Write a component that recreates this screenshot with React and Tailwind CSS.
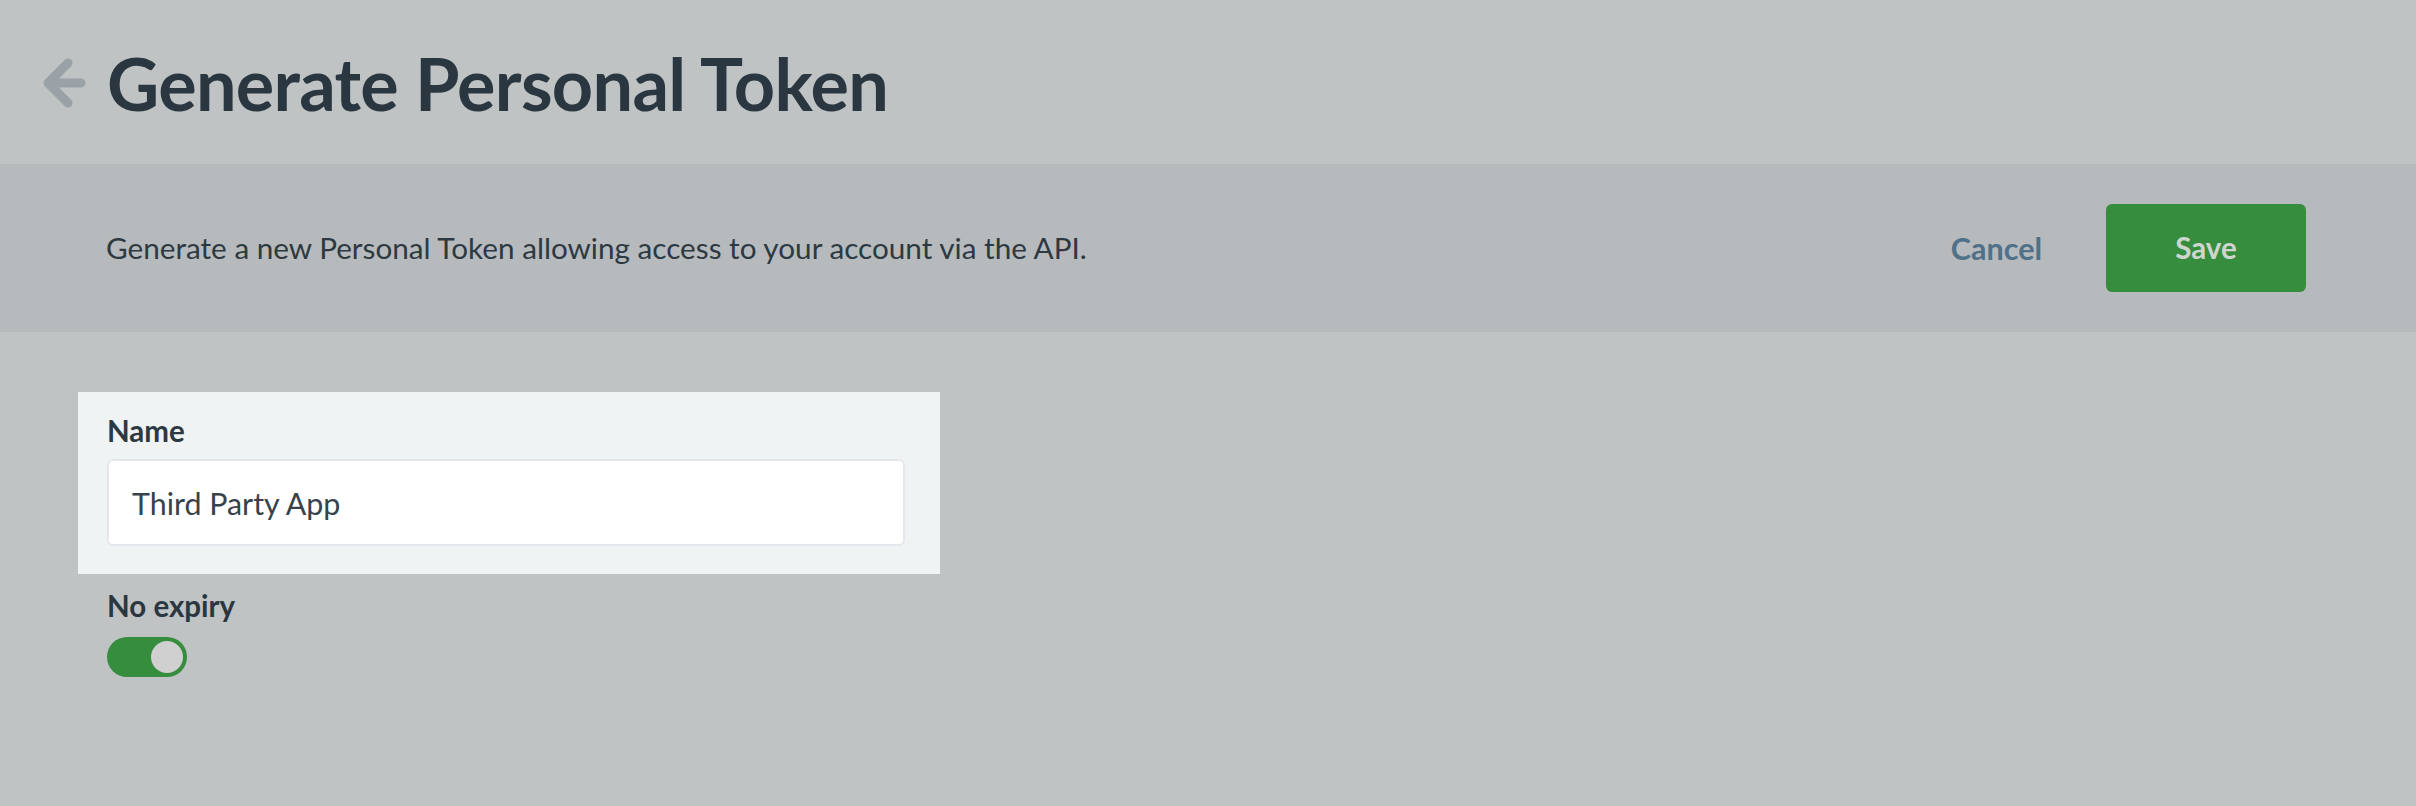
import React from "react";

export default function App() {
  return (
    <div
      className="min-h-screen w-full bg-[#bfc3c4] text-[#2b3740]"
      style={{ fontFamily: "Lato, 'Noto Sans', sans-serif" }}
    >
      {/* Header */}
      <header className="h-[164px] flex items-center pt-[2px]">
        <div className="w-[107px] flex justify-start pl-[41px]">
          <svg width="46" height="52" viewBox="0 0 46 52" fill="none">
            <path
              d="M27 6 L7 26 L27 46 M7 26 L40 26"
              stroke="#9aa2a7"
              strokeWidth="9"
              strokeLinecap="round"
              strokeLinejoin="round"
            />
          </svg>
        </div>
        <h1 className="text-[72px] leading-[1.2] font-bold text-[#2b3740] tracking-[-0.7px]">
          Generate Personal Token
        </h1>
      </header>

      {/* Description band */}
      <div className="h-[168px] bg-[#b6babc] flex items-center justify-between pl-[106px] pr-[110px]">
        <p className="text-[29.7px] leading-[1.2] text-[#2d3942]">
          Generate a new Personal Token allowing access to your account via the API.
        </p>
        <div className="flex items-center gap-[64px]">
          <button className="text-[30.5px] leading-[1.2] font-bold text-[#4f7189]">
            Cancel
          </button>
          <button className="w-[200px] h-[88px] rounded-[6px] bg-[#368d3d] text-[29.5px] leading-[1.2] font-bold text-[#ced6d0]">
            Save
          </button>
        </div>
      </div>

      {/* Form */}
      <div className="pl-[78px] pt-[60px]">
        <div className="w-[862px] bg-[#eff3f4] pl-[29px] pt-[21px] pb-[28px]">
          <label className="block text-[29.5px] leading-[1.2] font-bold text-[#2d3942]">
            Name
          </label>
          <div className="mt-[11px] w-[798px] h-[87px] bg-white border-2 border-[#e2e8eb] rounded-[6px] flex items-center pl-[23px]">
            <span className="text-[30.4px] leading-[1.2] text-[#36434c]">
              Third Party App
            </span>
          </div>
        </div>

        <div className="pl-[29px] pt-[14px]">
          <div className="text-[29.5px] leading-[1.2] font-bold text-[#2b3740]">
            No expiry
          </div>
          <div className="mt-[13px] w-[80px] h-[40px] rounded-full bg-[#368d3d] flex items-center justify-end pr-[4px]">
            <div className="w-[32px] h-[32px] rounded-full bg-[#d0d0d0]" />
          </div>
        </div>
      </div>
    </div>
  );
}
